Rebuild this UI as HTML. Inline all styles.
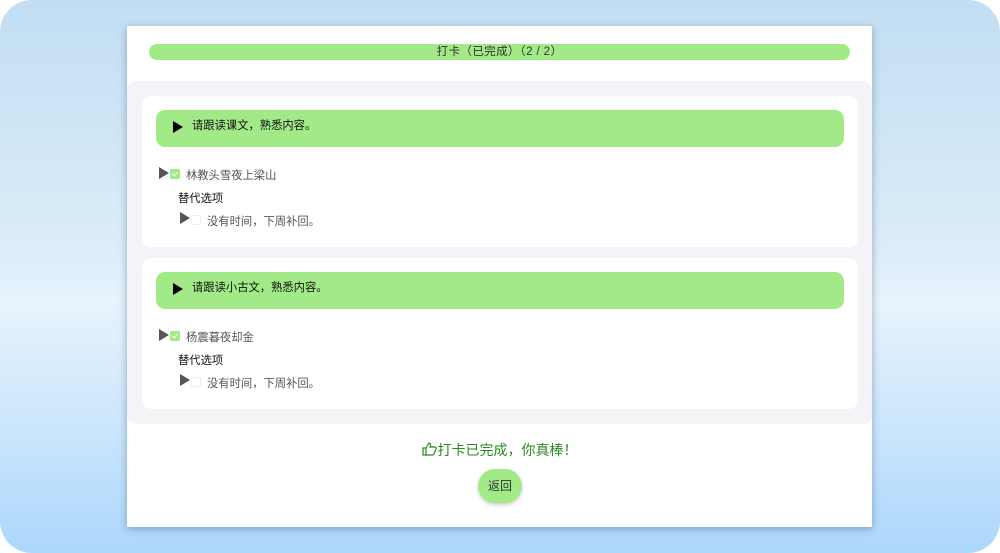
<!DOCTYPE html>
<html><head><meta charset="utf-8"><style>
*{margin:0;padding:0;box-sizing:border-box}
html,body{width:1000px;height:553px;overflow:hidden;background:#fff}
body{font-family:"Liberation Sans","Noto Sans CJK SC",sans-serif;font-size:12px;color:#222}
.bg{position:absolute;left:0;top:0;width:1000px;height:553px;border-radius:32px;background:linear-gradient(180deg,#c2def3 0%,#d8ebf8 40%,#e7f3fd 55%,#c8e4fc 80%,#acd7fc 100%)}
.card{position:absolute;left:127px;top:26px;width:745px;height:501px;background:#fff;box-shadow:0 2px 8px rgba(60,90,120,.45)}
.top{position:absolute;left:22px;top:18px;width:701px;height:16px;border-radius:8px;background:#a2ea87;text-align:center;font-size:11.5px;letter-spacing:.4px;line-height:16px;color:#333}
.gray{position:absolute;left:0;top:55px;width:745px;height:343px;background:#f3f3f8;border-radius:10px}
.inner{position:absolute;left:15px;width:716px;height:151px;background:#fff;border-radius:9px}
.bar{position:absolute;left:14px;top:14px;width:688px;height:37px;border-radius:9px;background:#a2ea87;font-size:11.3px;line-height:32px;padding-left:36px;color:#111}
.tri{position:absolute;width:0;height:0;border-top:6px solid transparent;border-bottom:6px solid transparent;border-left:10px solid #000}
.tri.g{border-left-color:#555}
.cb{position:absolute;width:10px;height:10px;border-radius:2px}
.t{position:absolute;font-size:11.3px;white-space:nowrap}
.done{position:absolute;left:0;width:745px;top:414px;text-align:center;color:#2a8a1e;font-size:14px}
.btn{position:absolute;left:351px;top:443px;width:44px;height:34px;border-radius:17px;background:#a2ea87;box-shadow:0 2px 4px rgba(0,0,0,.2);text-align:center;line-height:34px;font-size:12px;color:#333}
</style></head><body>
<div class="bg"></div>
<div class="card">
<div class="top">打卡（已完成）（2 / 2）</div>
<div class="gray">
 <div class="inner" style="top:15px">
  <div class="bar"><div class="tri" style="left:17px;top:11px"></div>请跟读课文，熟悉内容。</div>
  <div class="tri g" style="left:17px;top:71px"></div>
  <div class="cb" style="left:28px;top:73px;background:#a2ea87"><svg width="10" height="10" style="position:absolute;left:0;top:0"><path d="M2.5 5l2 2 3-4" fill="none" stroke="#fff" stroke-width="1"/></svg></div>
  <div class="t" style="left:44px;top:71px;color:#555">林教头雪夜上梁山</div>
  <div class="t" style="left:36px;top:94px;color:#111">替代选项</div>
  <div class="tri g" style="left:38px;top:116px"></div>
  <div class="cb" style="left:49px;top:119px;border:1px solid #eee"></div>
  <div class="t" style="left:65px;top:117px;color:#555">没有时间，下周补回。</div>
 </div>
 <div class="inner" style="top:177px">
  <div class="bar"><div class="tri" style="left:17px;top:11px"></div>请跟读小古文，熟悉内容。</div>
  <div class="tri g" style="left:17px;top:71px"></div>
  <div class="cb" style="left:28px;top:73px;background:#a2ea87"><svg width="10" height="10" style="position:absolute;left:0;top:0"><path d="M2.5 5l2 2 3-4" fill="none" stroke="#fff" stroke-width="1"/></svg></div>
  <div class="t" style="left:44px;top:71px;color:#555">杨震暮夜却金</div>
  <div class="t" style="left:36px;top:94px;color:#111">替代选项</div>
  <div class="tri g" style="left:38px;top:116px"></div>
  <div class="cb" style="left:49px;top:119px;border:1px solid #eee"></div>
  <div class="t" style="left:65px;top:117px;color:#555">没有时间，下周补回。</div>
 </div>
</div>
<div class="done"><svg width="16" height="14" viewBox="0 0 16 14" style="vertical-align:-1px"><path d="M1 6h3v7H1z M4 6l3-5c1 0 2 1 1.5 3L8 5h5c1 0 1.5 1 1 2l-2 5c-.3.6-.8 1-1.5 1H4" fill="none" stroke="#2a8a1e" stroke-width="1.2"/></svg>打卡已完成，你真棒！</div>
<div class="btn">返回</div>
</div>
</body></html>
